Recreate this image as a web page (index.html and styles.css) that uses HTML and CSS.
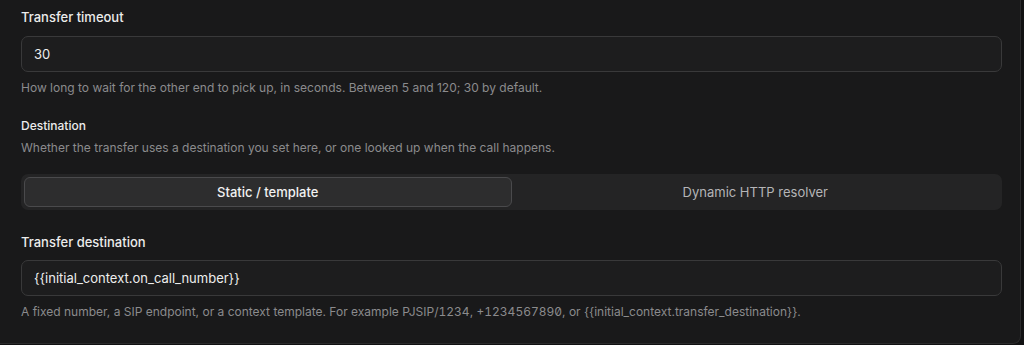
FILE: index.html
```html
<!DOCTYPE html>
<html>
<head>
<meta charset="utf-8">
<link rel="stylesheet" href="styles.css">
</head>
<body>
<div class="card">
  <div class="field">
    <div class="label">Transfer timeout</div>
    <div class="input">30</div>
    <div class="help">How long to wait for the other end to pick up, in seconds. Between 5 and 120; 30 by default.</div>
  </div>
  <div class="field field-dest">
    <div class="label">Destination</div>
    <div class="desc">Whether the transfer uses a destination you set here, or one looked up when the call happens.</div>
    <div class="segmented">
      <div class="seg active">Static / template</div>
      <div class="seg">Dynamic HTTP resolver</div>
    </div>
  </div>
  <div class="field field-target">
    <div class="label">Transfer destination</div>
    <div class="input">{{initial_context.on_call_number}}</div>
    <div class="help">A fixed number, a SIP endpoint, or a context template. For example <span class="code">PJSIP/1234</span>, <span class="code">+1234567890</span>, or {{initial_context.transfer_destination}}.</div>
  </div>
</div>
</body>
</html>
```
FILE: styles.css
```css
html, body {
  margin: 0;
  padding: 0;
  background: #111112;
  font-family: Inter, "Noto Sans", sans-serif;
}
.card {
  box-sizing: border-box;
  width: 1021px;
  height: 344px;
  background: #19191a;
  border: 1px solid #2a2a2b;
  border-top: none;
  border-left: none;
  border-radius: 0 0 8px 0;
  padding: 8px 18px 0 21px;
}
.label {
  font-size: 13px;
  line-height: 18px;
  font-weight: 500;
  color: #ececec;
}
.input {
  box-sizing: border-box;
  height: 36px;
  margin-top: 10px;
  border: 1px solid #39393a;
  border-radius: 7px;
  background: #1d1d1e;
  color: #ededed;
  font-size: 13px;
  line-height: 34px;
  padding: 0 12px;
}
.help, .desc {
  font-size: 12px;
  line-height: 16px;
  color: #8b8b8d;
}
.code {
  font-feature-settings: "tnum", "zero";
}
.help { margin-top: 8px; }
.field-dest { margin-top: 21px; }
.field-dest .label { font-size: 12px; }
.desc { margin-top: 5px; }
.segmented {
  margin-top: 18px;
  height: 36px;
  box-sizing: border-box;
  padding: 3px;
  background: #242425;
  border-radius: 7px;
  display: grid;
  grid-template-columns: 1fr 1fr;
}
.seg {
  display: flex;
  align-items: center;
  justify-content: center;
  font-size: 13px;
  color: #b5b5b7;
  border-radius: 6px;
}
.seg.active {
  background: #2d2d2e;
  border: 1px solid #4a4a4c;
  color: #f2f2f2;
  font-weight: 500;
}
.field-target { margin-top: 23px; }
.field-target .input { margin-top: 9px; }
```
